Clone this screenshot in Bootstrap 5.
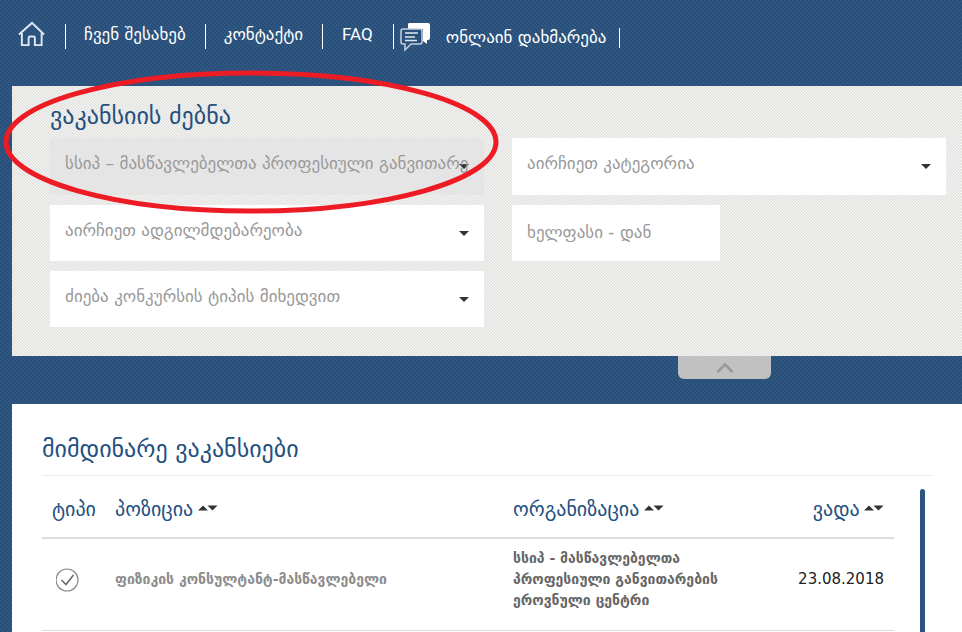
<!DOCTYPE html>
<html lang="ka">
<head>
<meta charset="utf-8">
<meta name="viewport" content="width=device-width, initial-scale=1">
<title>ვაკანსიები</title>
<link href="https://cdn.jsdelivr.net/npm/bootstrap@5.3.0/dist/css/bootstrap.min.css" rel="stylesheet">
<style>
:root { --navy: #28507a; --ink: #24507f; --geo: "DejaVu Sans", sans-serif; }
body {
  font-family: var(--geo);
  background: var(--navy) url("data:image/svg+xml,%3Csvg xmlns='http://www.w3.org/2000/svg' width='4' height='4' shape-rendering='crispEdges'%3E%3Cpath d='M0 0h1v1H0zM1 1h1v1H1zM2 2h1v1H2zM3 3h1v1H3z' fill='%23375c86'/%3E%3C/svg%3E");
}
.top-bar { height: 86px; padding: 0 18px; }
.top-bar a { color: #fff; text-decoration: none; font-size: 17px; line-height: 24px; white-space: nowrap; }
.top-bar .latin { font-family: Roboto, sans-serif; padding: 0 1px; }
.top-item { border-right: 1px solid #fff; height: 25px; padding: 0 19px 6px 18px; }
.top-item.home-item { padding: 0 20px 6px 0; }
.top-item.help-item { height: 20px; margin-top: 4px; padding: 0 13px 2px 6px; }
.help-link { gap: 15px; }
.search-panel {
  margin-left: 12px; padding: 15px 16px 29px 38px;
  background: #e4e4e2 url("data:image/svg+xml,%3Csvg xmlns='http://www.w3.org/2000/svg' width='3' height='3' shape-rendering='crispEdges'%3E%3Cpath d='M0 0h1v1H0zM1 1h1v1H1zM2 2h1v1H2z' fill='%23f6f6f4'/%3E%3C/svg%3E");
}
.panel-title { color: var(--ink); font-size: 24px; line-height: 30px; margin-bottom: 7px; }
.fields { display: grid; grid-template-columns: 1fr 1fr; grid-template-rows: 57px 56px 56px; gap: 10px 28px; }
.fields .form-select, .fields .form-control {
  height: 100%; border: 0; border-radius: 0; padding: 0 15px 5px; color: #999; font-size: 17px;
  font-family: var(--geo);
}
.fields .form-control { padding-bottom: 2px; width: 48%; }
.fields .form-control::placeholder { color: #999; opacity: 1; }
.fields .form-select {
  background-image: url("data:image/svg+xml,%3Csvg xmlns='http://www.w3.org/2000/svg' viewBox='0 0 10 5'%3E%3Cpath d='M0 0h10L5 5z' fill='%23333'/%3E%3C/svg%3E");
  background-size: 10px 5px; background-position: right 15px center;
}
.fields .form-select.chosen { background-color: #e5e5e5; }
.fold-row { height: 48px; padding-right: 191px; }
.fold-btn { width: 93px; height: 23px; border: 0; border-radius: 0 0 6px 6px; background: #c1c1c1; padding: 0; line-height: 1; }
.results { margin-left: 12px; padding: 0 30px; background: #fff; }
.results-title { color: var(--ink); font-size: 24px; line-height: 32px; padding: 29px 0 10px; border-bottom: 1px solid #ececec; }
.vacancies { margin: 0; color: #666; font-size: 14px; line-height: 21px; table-layout: fixed; }
.vacancies > thead th { color: var(--ink); font-size: 20px; line-height: 24px; padding: 21px 10px 16px; border-bottom: 2px solid #ddd; white-space: nowrap; }
.vacancies > tbody td { padding: 9px 10px 19px; vertical-align: middle; border-bottom: 1px solid #ddd; }
.vacancies .c-type { width: 63px; }
.vacancies .c-org { width: 235px; }
.vacancies .c-date { width: 156px; }
.vacancies .due { color: #222; font-size: 15px; }
.vacancies a { color: #8c8c8c; text-decoration: none; }
.sorter { border: 0; background: none; padding: 0 0 6px; line-height: 1; vertical-align: middle; margin-left: -2px; }
.sorter svg { display: block; }
.scroll-track { padding: 13px 7px 0 26px; }
.scroll-thumb { width: 5px; background: #2d5480; border-radius: 3px 3px 0 0; }
.ring { left: 3px; top: 70px; pointer-events: none; }
</style>
</head>
<body class="d-flex flex-column min-vh-100 position-relative">
<nav class="top-bar d-flex align-items-start" aria-label="მთავარი">
  <ul class="list-unstyled d-flex align-items-start mb-0 pt-4">
    <li class="top-item home-item d-flex align-items-center"><a href="#" aria-label="მთავარი გვერდი"><svg class="d-block" width="27" height="26" viewBox="0 0 28 26" fill="none" stroke="#dfe8f4" stroke-width="2"><path d="M1 13.500 14.500 1.500 27 13.500M4 12v12.500h7V17q0-1.500 1.500-1.500h3.500q1.500 0 1.500 1.500v7.500h7V12"/></svg></a></li>
    <li class="top-item d-flex align-items-center"><a href="#">ჩვენ შესახებ</a></li>
    <li class="top-item d-flex align-items-center"><a href="#">კონტაქტი</a></li>
    <li class="top-item d-flex align-items-center"><a href="#" class="latin">FAQ</a></li>
    <li class="top-item help-item d-flex align-items-center"><a href="#" class="help-link d-flex align-items-center"><svg width="31" height="30" viewBox="0 0 31 30"><path d="M9 1h19q2 0 2 2v13q0 2-2 2h-1v4l-4-3V7H8V3q0-2 1-2z" fill="#fff"/><path d="M3 7h17q2 0 2 2v11q0 2-2 2H11l-6 6v-6H3q-2 0-2-2V9q0-2 2-2z" fill="#28507a" stroke="#c3d0e0" stroke-width="1.500"/><path d="M5 11h13M5 15h10M5 18.500h12" stroke="#dfe8f4" stroke-width="1.500"/></svg>ონლაინ დახმარება</a></li>
  </ul>
</nav>

<section class="search-panel">
  <h1 class="panel-title fw-normal">ვაკანსიის ძებნა</h1>
  <form class="fields">
    <select class="form-select chosen" aria-label="ორგანიზაცია"><option>სსიპ – მასწავლებელთა პროფესიული განვითარების ეროვნული ცენტრი</option></select>
    <select class="form-select" aria-label="კატეგორია"><option>აირჩიეთ კატეგორია</option></select>
    <select class="form-select" aria-label="ადგილმდებარეობა"><option>აირჩიეთ ადგილმდებარეობა</option></select>
    <input class="form-control" type="text" placeholder="ხელფასი - დან" aria-label="ხელფასი - დან">
    <select class="form-select" aria-label="კონკურსის ტიპი"><option>ძიება კონკურსის ტიპის მიხედვით</option></select>
  </form>
</section>

<div class="fold-row d-flex justify-content-end align-items-start">
  <button class="fold-btn" type="button" aria-label="აკეცვა"><svg width="18" height="12" viewBox="0 0 18 12" fill="none" stroke="#999" stroke-width="2.500"><path d="M1.500 10 9 2.500l7.500 7.500"/></svg></button>
</div>

<main class="results flex-grow-1 d-flex flex-column">
  <h2 class="results-title fw-normal mb-0">მიმდინარე ვაკანსიები</h2>
  <div class="d-flex flex-grow-1">
    <div class="flex-grow-1">
      <table class="table vacancies">
        <thead>
          <tr>
            <th class="c-type fw-normal" scope="col">ტიპი</th>
            <th class="fw-normal" scope="col">პოზიცია <button class="sorter" type="button" aria-label="დალაგება პოზიციით"><svg width="20" height="6" viewBox="0 0 20 6" fill="#333"><path d="M0 5.500 5 .5l5 5zM9.500 .5h10l-5 5z"/></svg></button></th>
            <th class="c-org fw-normal" scope="col">ორგანიზაცია <button class="sorter" type="button" aria-label="დალაგება ორგანიზაციით"><svg width="20" height="6" viewBox="0 0 20 6" fill="#333"><path d="M0 5.500 5 .5l5 5zM9.500 .5h10l-5 5z"/></svg></button></th>
            <th class="c-date fw-normal text-end" scope="col">ვადა <button class="sorter" type="button" aria-label="დალაგება ვადით"><svg width="20" height="6" viewBox="0 0 20 6" fill="#333"><path d="M0 5.500 5 .5l5 5zM9.500 .5h10l-5 5z"/></svg></button></th>
          </tr>
        </thead>
        <tbody>
          <tr>
            <td><svg class="d-block ms-1" width="26" height="26" viewBox="0 0 26 26" fill="none"><circle cx="11" cy="13" r="11" stroke="#888" stroke-width="1.200"/><path d="M5.500 13l4.500 4.500L17.500 8" stroke="#666" stroke-width="1.500"/></svg></td>
            <td><a href="#" class="fw-bold">ფიზიკის კონსულტანტ-მასწავლებელი</a></td>
            <td class="fw-bold">სსიპ - მასწავლებელთა პროფესიული განვითარების ეროვნული ცენტრი</td>
            <td class="due text-end">23.08.2018</td>
          </tr>
        </tbody>
      </table>
    </div>
    <div class="scroll-track d-flex"><div class="scroll-thumb"></div></div>
  </div>
</main>

<svg class="ring position-absolute" width="496" height="144" viewBox="0 0 496 144" fill="none"><ellipse cx="248" cy="72" rx="245" ry="69" stroke="#ed1c24" stroke-width="5"/></svg>
<script src="https://cdn.jsdelivr.net/npm/bootstrap@5.3.0/dist/js/bootstrap.bundle.min.js"></script>
</body>
</html>
